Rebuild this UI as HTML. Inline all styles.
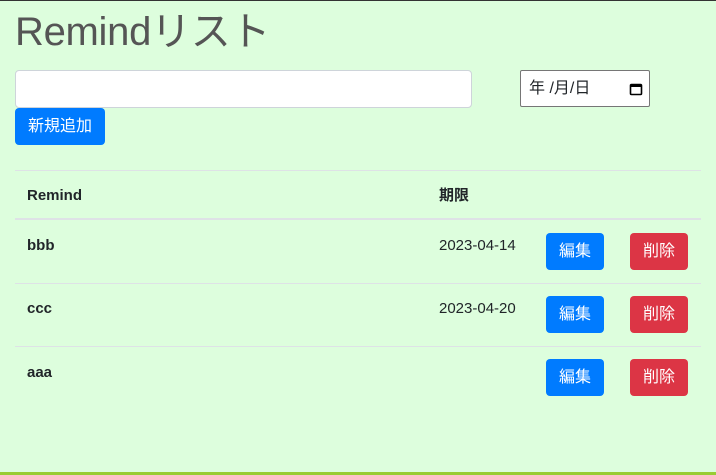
<!DOCTYPE html>
<html><head><meta charset="utf-8"><style>
body{margin:0;width:716px;height:475px;background:#ddfedd;font-family:"Liberation Sans","Noto Sans CJK JP",sans-serif;position:relative;overflow:hidden;color:#212529}
.a{position:absolute}
h1{position:absolute;left:15px;top:4px;margin:0;font-size:40px;font-weight:400;color:#555;line-height:56px;letter-spacing:-0.3px}
.inp{left:15px;top:70px;width:455px;height:36px;background:#fff;border:1px solid #ced4da;border-radius:4px}
.date{left:520px;top:70px;width:130px;height:37px;background:#fff;border:1px solid #767676;border-radius:2px;font-size:16px;line-height:36px;box-sizing:border-box;padding-left:8px}
.btn{position:absolute;color:#fff;font-size:16px;border-radius:4px;text-align:center;line-height:37px;height:37px}
.blue{background:#007bff}.red{background:#dc3545}
.line{position:absolute;left:15px;width:686px;height:1px;background:#dee2e6}
.t{position:absolute;font-size:15px;line-height:20px}
b.t{font-weight:700}
</style></head><body>
<div class="a" style="left:0;top:0;width:716px;height:1px;background:#333"></div>
<h1>Remindリスト</h1>
<div class="a inp"></div>
<div class="a date">年 /月/日<svg style="position:absolute;right:6px;top:11px" width="14" height="14" viewBox="0 0 14 14"><rect x="1.5" y="2.5" width="11" height="10" rx="1" fill="none" stroke="#000" stroke-width="1.6"/><rect x="1.5" y="2.5" width="11" height="2.5" fill="#000"/></svg></div>
<div class="btn blue" style="left:15px;top:108px;width:90px">新規追加</div>
<div class="line" style="top:170px"></div>
<b class="t" style="left:27px;top:186px">Remind</b>
<b class="t" style="left:439px;top:186px">期限</b>
<div class="line" style="top:218px;height:2px"></div>
<b class="t" style="left:27px;top:236px">bbb</b>
<span class="t" style="left:439px;top:236px">2023-04-14</span>
<div class="btn blue" style="left:546px;top:233px;width:58px">編集</div>
<div class="btn red" style="left:630px;top:233px;width:58px">削除</div>
<div class="line" style="top:283px"></div>
<b class="t" style="left:27px;top:299px">ccc</b>
<span class="t" style="left:439px;top:299px">2023-04-20</span>
<div class="btn blue" style="left:546px;top:296px;width:58px">編集</div>
<div class="btn red" style="left:630px;top:296px;width:58px">削除</div>
<div class="line" style="top:346px"></div>
<b class="t" style="left:27px;top:363px">aaa</b>
<div class="btn blue" style="left:546px;top:359px;width:58px">編集</div>
<div class="btn red" style="left:630px;top:359px;width:58px">削除</div>
<div class="a" style="left:0;top:472px;width:716px;height:3px;background:#99cc33"></div>
</body></html>
